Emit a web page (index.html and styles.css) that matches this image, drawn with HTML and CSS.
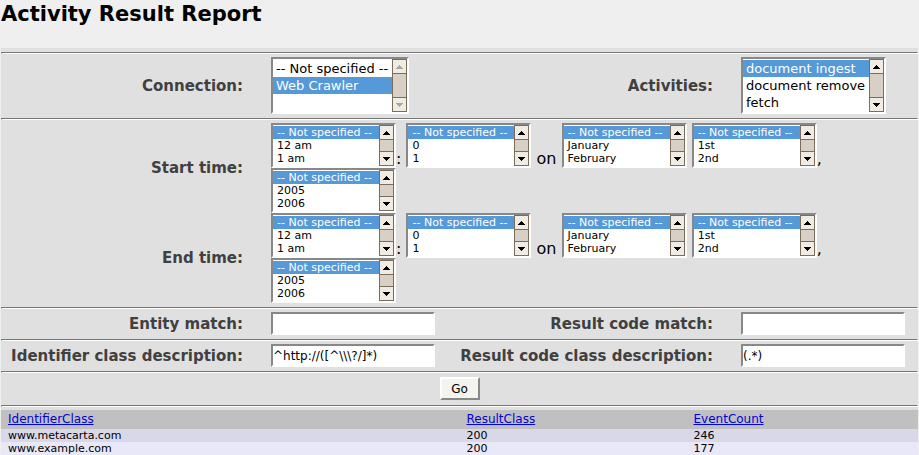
FILE: index.html
```
<!DOCTYPE html>
<html lang="en">
<head>
<meta charset="utf-8">
<title>Activity Result Report</title>
<link rel="stylesheet" href="styles.css">
</head>
<body>
<svg class="symbols" aria-hidden="true">
  <symbol id="up" viewBox="0 0 7 4"><path d="M3 0h1v1h1v1h1v1h1v1H0V3h1V2h1V1h1z"/></symbol>
  <symbol id="down" viewBox="0 0 7 4"><path d="M0 0h7v1H6v1H5v1H4v1H3V3H2V2H1V1H0z"/></symbol>
</svg>
<h1>Activity Result Report</h1>
<form class="report">
  <hr>
  <div class="row">
    <label for="connection">Connection:</label>
    <div class="field"><span class="listbox large connection"><select id="connection" size="3"><option>-- Not specified --</option><option selected>Web Crawler</option></select><span class="bar off"><svg><use href="#up"/></svg><svg><use href="#down"/></svg></span></span></div>
    <label for="activities">Activities:</label>
    <div class="field"><span class="listbox large activities"><select id="activities" size="3" multiple><option selected>document ingest</option><option>document remove</option><option>fetch</option></select><span class="bar"><svg><use href="#up"/></svg><svg><use href="#down"/></svg></span></span></div>
  </div>
  <hr>
  <div class="row">
    <label for="start-hour">Start time:</label>
    <div class="field wide">
      <span class="listbox"><select id="start-hour" size="3"><option selected>-- Not specified --</option><option>12 am</option><option>1 am</option></select><span class="bar"><svg><use href="#up"/></svg><svg><use href="#down"/></svg></span></span>:
      <span class="listbox"><select aria-label="Start minute" size="3"><option selected>-- Not specified --</option><option>0</option><option>1</option></select><span class="bar"><svg><use href="#up"/></svg><svg><use href="#down"/></svg></span></span>
      on
      <span class="listbox"><select aria-label="Start month" size="3"><option selected>-- Not specified --</option><option>January</option><option>February</option></select><span class="bar"><svg><use href="#up"/></svg><svg><use href="#down"/></svg></span></span>
      <span class="listbox"><select aria-label="Start day" size="3"><option selected>-- Not specified --</option><option>1st</option><option>2nd</option></select><span class="bar"><svg><use href="#up"/></svg><svg><use href="#down"/></svg></span></span>,
      <span class="listbox"><select aria-label="Start year" size="3"><option selected>-- Not specified --</option><option>2005</option><option>2006</option></select><span class="bar"><svg><use href="#up"/></svg><svg><use href="#down"/></svg></span></span>
    </div>
    <label for="end-hour">End time:</label>
    <div class="field wide">
      <span class="listbox"><select id="end-hour" size="3"><option selected>-- Not specified --</option><option>12 am</option><option>1 am</option></select><span class="bar"><svg><use href="#up"/></svg><svg><use href="#down"/></svg></span></span>:
      <span class="listbox"><select aria-label="End minute" size="3"><option selected>-- Not specified --</option><option>0</option><option>1</option></select><span class="bar"><svg><use href="#up"/></svg><svg><use href="#down"/></svg></span></span>
      on
      <span class="listbox"><select aria-label="End month" size="3"><option selected>-- Not specified --</option><option>January</option><option>February</option></select><span class="bar"><svg><use href="#up"/></svg><svg><use href="#down"/></svg></span></span>
      <span class="listbox"><select aria-label="End day" size="3"><option selected>-- Not specified --</option><option>1st</option><option>2nd</option></select><span class="bar"><svg><use href="#up"/></svg><svg><use href="#down"/></svg></span></span>,
      <span class="listbox"><select aria-label="End year" size="3"><option selected>-- Not specified --</option><option>2005</option><option>2006</option></select><span class="bar"><svg><use href="#up"/></svg><svg><use href="#down"/></svg></span></span>
    </div>
  </div>
  <hr>
  <div class="row">
    <label for="entity">Entity match:</label>
    <div class="field"><input type="text" id="entity"></div>
    <label for="code">Result code match:</label>
    <div class="field"><input type="text" id="code"></div>
  </div>
  <hr>
  <div class="row">
    <label for="idclass">Identifier class description:</label>
    <div class="field"><input type="text" id="idclass" value="^http://([^\\\?/]*)"></div>
    <label for="codeclass">Result code class description:</label>
    <div class="field"><input type="text" id="codeclass" value="(.*)"></div>
  </div>
  <hr>
  <div class="actions"><button type="button">Go</button></div>
  <hr>
  <table>
    <thead>
      <tr><th><a href="#id">IdentifierClass</a></th><th><a href="#result">ResultClass</a></th><th><a href="#count">EventCount</a></th></tr>
    </thead>
    <tbody>
      <tr><td>www.metacarta.com</td><td>200</td><td>246</td></tr>
      <tr><td>www.example.com</td><td>200</td><td>177</td></tr>
    </tbody>
  </table>
</form>
</body>
</html>
```
FILE: styles.css
```
* {
  box-sizing: border-box;
}

body {
  margin: 0 1px;
  background: #efefef;
  color: #000;
  font-family: "DejaVu Sans", sans-serif;
  font-size: 16px;
}

.symbols {
  display: none;
}

h1 {
  margin: 0 0 20px;
  font-size: 21px;
  line-height: 28px;
}

.report {
  padding-top: 4px;
  background: #e0e0e0;
}

hr {
  height: 2px;
  margin: 0;
  border: 1px solid;
  border-color: #777 #fff #fff #777;
}

.row {
  display: grid;
  grid-template-columns: 242px 200px 270px 1fr;
  align-items: center;
  padding: 3px 0 4px;
}

label {
  color: #404040;
  font-size: 15px;
  font-weight: bold;
  line-height: 18px;
  text-align: right;
  white-space: nowrap;
}

.field {
  padding-left: 28px;
}

.wide {
  grid-column: 2 / -1;
  line-height: 18px;
}

.listbox {
  display: inline-flex;
  width: 125px;
  height: 45px;
  vertical-align: bottom;
  background: #fff;
  border: 2px solid;
  border-color: #888 #fff #fff #888;
}

.large {
  height: 57px;
}

.connection {
  width: 138px;
}

.activities {
  width: 145px;
}

select {
  flex: 1;
  min-width: 0;
  margin: 0;
  padding: 1px 0 0;
  border: 0;
  border-radius: 0;
  outline: 0;
  background: #fff;
  color: #000;
  font: 11px "DejaVu Sans", sans-serif;
  overflow: hidden;
  scrollbar-width: none;
}

option {
  min-height: 13px;
  padding: 0 4px;
  line-height: 13px;
}

.large select {
  font-size: 13px;
}

.large option {
  min-height: 17px;
  padding: 1px 3px;
  line-height: 15px;
}

option:checked {
  background: linear-gradient(#5599d8, #5599d8);
  -webkit-text-fill-color: #fff;
}

.bar {
  display: flex;
  flex-direction: column;
  justify-content: space-between;
  width: 15px;
  background: #d8d0c4;
  border: 1px solid #7c6c5c;
}

.bar svg {
  width: 13px;
  height: 14px;
  padding: 5px 3px 4px;
  background: #f0ece4;
}

.bar svg:first-child {
  border-bottom: 1px solid #7c6c5c;
}

.bar svg:last-child {
  border-top: 1px solid #7c6c5c;
}

.off {
  fill: #aaa89c;
}

input {
  display: block;
  width: 164px;
  height: 23px;
  padding: 0;
  background: #fff;
  border: 2px solid;
  border-color: #888 #fff #fff #888;
  border-radius: 0;
  font: 12px "DejaVu Sans", sans-serif;
}

.actions {
  display: flex;
  justify-content: center;
  padding: 4px 0 5px;
}

button {
  width: 40px;
  height: 23px;
  padding: 0;
  background: #f4f3ee;
  border: 2px solid;
  border-color: #fff #888 #888 #fff;
  border-radius: 0;
  font: 12px "DejaVu Sans", sans-serif;
}

table {
  width: 100%;
  margin-top: 3px;
  border-collapse: collapse;
  table-layout: fixed;
  font-size: 11px;
  line-height: 13px;
}

th,
td {
  padding: 0 7px;
  text-align: left;
  font-weight: normal;
}

th {
  height: 19px;
  background: #c0c0c0;
  font-size: 12px;
}

th:first-child {
  width: 50%;
}

th:nth-child(2) {
  width: 227px;
}

tbody tr {
  background: #e8e8f8;
}

tbody tr:first-child {
  background: #d8d8e8;
}

a {
  color: #0000e0;
}
```
